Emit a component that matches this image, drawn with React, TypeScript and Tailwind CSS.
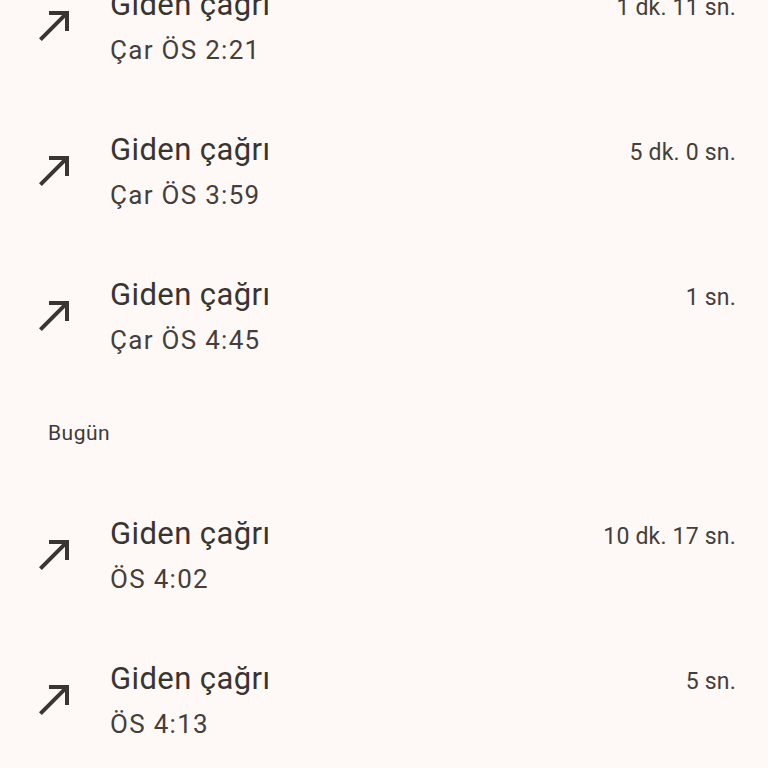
import React from "react";

type Call = { time: string; duration: string };

const earlier: Call[] = [
  { time: "Çar ÖS 2:21", duration: "1 dk. 11 sn." },
  { time: "Çar ÖS 3:59", duration: "5 dk. 0 sn." },
  { time: "Çar ÖS 4:45", duration: "1 sn." },
];

const today: Call[] = [
  { time: "ÖS 4:02", duration: "10 dk. 17 sn." },
  { time: "ÖS 4:13", duration: "5 sn." },
];

function CallMadeIcon() {
  return (
    <svg width="48" height="48" viewBox="0 0 24 24" fill="#3b3431">
      <path d="M9 5v2h6.59L4 18.59 5.41 20 17 8.41V15h2V5z" />
    </svg>
  );
}

function CallRow({ call }: { call: Call }) {
  return (
    <div className="flex h-[145px] items-center pl-[31px] pr-8">
      <div className="w-[79px] shrink-0">
        <CallMadeIcon />
      </div>
      <div className="flex flex-1 flex-col pt-[3px]">
        <div className="flex items-center justify-between">
          <span className="text-[31px] leading-[42px] tracking-[0.4px] text-[#3a3431]">Giden çağrı</span>
          <span className="pt-[6px] text-[23px] leading-[42px] tracking-[0.2px] text-[#453e3b]">{call.duration}</span>
        </div>
        <span className="text-[26px] leading-[42px] tracking-[1.3px] text-[#453e3b]">{call.time}</span>
      </div>
    </div>
  );
}

export default function App() {
  return (
    <div
      className="h-[768px] w-[768px] overflow-hidden bg-[#fef9f7]"
      style={{ fontFamily: "Roboto, 'Noto Sans', sans-serif" }}
    >
      <div className="-mt-[48px]">
        {earlier.map((c) => (
          <CallRow key={c.time} call={c} />
        ))}
        <div className="flex h-[94px] items-center pl-12">
          <span className="text-[21px] tracking-[0.5px] text-[#3f3936]">Bugün</span>
        </div>
        {today.map((c) => (
          <CallRow key={c.time} call={c} />
        ))}
      </div>
    </div>
  );
}
